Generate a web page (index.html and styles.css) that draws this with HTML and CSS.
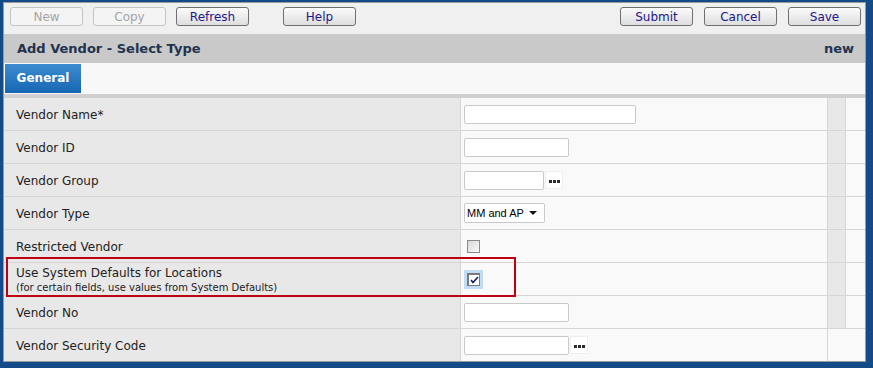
FILE: index.html
```html
<!DOCTYPE html>
<html lang="en">
<head>
    <meta charset="UTF-8">
    <title>Add Vendor - Select Type</title>
    <link rel="stylesheet" href="styles.css">
</head>
<body>
    <div class="panel">
        <!-- toolbar -->
        <div class="toolbar">
            <div class="btn-group">
                <button class="btn" disabled>New</button>
                <button class="btn" disabled>Copy</button>
                <button class="btn">Refresh</button>
                <button class="btn help">Help</button>
            </div>
            <div class="btn-group right">
                <button class="btn">Submit</button>
                <button class="btn">Cancel</button>
                <button class="btn">Save</button>
            </div>
        </div>

        <!-- title bar -->
        <div class="title-bar">
            <span>Add Vendor - Select Type</span>
            <span>new</span>
        </div>

        <!-- tabs -->
        <div class="tabs">
            <div class="tab active">General</div>
        </div>

        <!-- form -->
        <div class="form-wrap">
            <table class="form">
                <tr>
                    <td class="label">Vendor Name*</td>
                    <td class="value"><span class="field wide"></span></td>
                    <td class="gap"></td><td class="end"></td>
                </tr>
                <tr>
                    <td class="label">Vendor ID</td>
                    <td class="value"><span class="field"></span></td>
                    <td class="gap"></td><td class="end"></td>
                </tr>
                <tr>
                    <td class="label">Vendor Group</td>
                    <td class="value"><span class="field short"></span><span class="lookup"><i></i><i></i><i></i></span></td>
                    <td class="gap"></td><td class="end"></td>
                </tr>
                <tr>
                    <td class="label">Vendor Type</td>
                    <td class="value"><span class="dropdown">MM and AP<span class="arrow"></span></span></td>
                    <td class="gap"></td><td class="end"></td>
                </tr>
                <tr>
                    <td class="label">Restricted Vendor</td>
                    <td class="value"><span class="check-wrap"><span class="check"></span></span></td>
                    <td class="gap"></td><td class="end"></td>
                </tr>
                <tr>
                    <td class="label">Use System Defaults for Locations<br><small>(for certain fields, use values from System Defaults)</small></td>
                    <td class="value"><span class="check-wrap focused"><span class="check checked"><svg width="9" height="8" viewBox="0 0 9 8"><path d="M1 4 L3 6.5 L8 1" fill="none" stroke="#1a1a60" stroke-width="1.6"/></svg></span></span></td>
                    <td class="gap"></td><td class="end"></td>
                </tr>
                <tr>
                    <td class="label">Vendor No</td>
                    <td class="value"><span class="field"></span></td>
                    <td class="gap"></td><td class="end"></td>
                </tr>
                <tr>
                    <td class="label">Vendor Security Code</td>
                    <td class="value"><span class="field"></span><span class="lookup"><i></i><i></i><i></i></span></td>
                    <td class="end" colspan="2"></td>
                </tr>
            </table>
            <div class="highlight"></div>
        </div>
    </div>
</body>
</html>
```

FILE: styles.css
```css
html, body {
    margin: 0;
    padding: 0;
}
body {
    background-color: #124b88;
    padding: 2px 7px 6px 3px;
    font-family: "DejaVu Sans", Verdana, sans-serif;
    font-size: 12px;
    color: #222;
}
.panel {
    height: 358px;
    border: 1px solid #9a9a9a;
    background-color: #f0f0f0;
    display: flex;
    flex-direction: column;
}
.toolbar {
    height: 31px;
    display: flex;
    justify-content: space-between;
    padding: 0 4px 0 6px;
    align-items: flex-start;
}
.btn-group {
    display: flex;
    gap: 10px;
    padding-top: 4px;
}
.btn-group.right {
    gap: 11px;
}
.btn {
    width: 73px;
    height: 19px;
    padding: 0;
    font-family: "DejaVu Sans", Verdana, sans-serif;
    font-size: 12px;
    color: #22168e;
    background: linear-gradient(#fbfbfb, #dedede);
    border: 1px solid #707070;
    border-radius: 3px;
    line-height: 16px;
}
.btn.help {
    margin-left: 24px;
}
.btn[disabled] {
    color: #a4a4a4;
    border-color: #c4c4c4;
    background: #f4f4f4;
}
.title-bar {
    height: 29px;
    background-color: #c8c9c8;
    display: flex;
    justify-content: space-between;
    align-items: center;
    padding: 0 11px 0 13px;
    font-size: 13px;
    font-weight: bold;
    color: #1f3350;
}
.tabs {
    background-color: #f8f8f8;
    border-bottom: 4px solid #d0d0d0;
    box-sizing: border-box;
    height: 35px;
    padding: 1px 0 0 1px;
}
.tab {
    width: 76px;
    height: 29px;
    line-height: 29px;
    text-align: center;
    color: #fff;
    font-weight: bold;
    font-size: 12px;
}
.tab.active {
    background: linear-gradient(#3e8bd0, #1566b2);
}
.form-wrap {
    position: relative;
    flex: 1;
    background-color: #f9f9f9;
}
.form {
    width: 100%;
    border-collapse: collapse;
    table-layout: fixed;
}
.form td {
    height: 32px;
    padding: 0;
    border-bottom: 1px solid #d6d6d6;
    vertical-align: middle;
}
.form tr:last-child td {
    border-bottom: none;
}
.form td.label {
    width: 444px;
    padding: 2px 0 0 12px;
    height: 30px;
    background-color: #e8e8e8;
    border-right: 1px solid #d6d6d6;
    font-size: 12px;
    color: #222;
    line-height: 14px;
}
.form td.label small {
    font-size: 10px;
}
.form td.value {
    width: 363px;
    padding-left: 3px;
    background-color: #f9f9f9;
    border-right: 1px solid #d6d6d6;
}
.form td.gap {
    width: 17px;
    background-color: #e8e8e8;
    border-right: 1px solid #d6d6d6;
}
.form td.end {
    background-color: #f9f9f9;
}
.field {
    display: inline-block;
    vertical-align: middle;
    width: 103px;
    height: 17px;
    background: #fff;
    border: 1px solid #c9c9c9;
    border-radius: 2px;
}
.field.wide {
    width: 170px;
}
.field.short {
    width: 78px;
}
.lookup {
    display: inline-flex;
    vertical-align: middle;
    align-items: center;
    justify-content: center;
    gap: 1px;
    width: 18px;
    height: 18px;
    background: #fff;
    border: 1px solid #eee;
    box-sizing: border-box;
    margin-left: 1px;
    padding-top: 3px;
}
.lookup i {
    width: 3px;
    height: 3px;
    background: #2a2a2a;
}
.dropdown {
    display: inline-flex;
    align-items: center;
    justify-content: space-between;
    padding: 0 7px 0 2px;
    box-sizing: border-box;
    width: 81px;
    height: 20px;
    background: #fff;
    border: 1px solid #c9c9c9;
    border-radius: 2px;
    font-family: "Liberation Sans", Arial, sans-serif;
    font-size: 11px;
    color: #000;
    vertical-align: middle;
}
.arrow {
    width: 0;
    height: 0;
    border-left: 4px solid transparent;
    border-right: 4px solid transparent;
    border-top: 4px solid #111;
}
.check-wrap {
    display: inline-flex;
    align-items: center;
    justify-content: center;
    width: 19px;
    height: 19px;
    vertical-align: middle;
}
.check-wrap.focused {
    background-color: #c2dcf6;
}
.check {
    display: inline-flex;
    align-items: center;
    justify-content: center;
    width: 13px;
    height: 13px;
    box-sizing: border-box;
    border: 1px solid #8a8a8a;
    background: linear-gradient(135deg, #d8d8d8, #fbfbfb);
}
.check.checked {
    background: #fff;
    border-color: #7a7a7a;
    border-top-width: 2px;
    border-left-width: 2px;
}
.highlight {
    position: absolute;
    left: 2px;
    top: 159px;
    width: 506px;
    height: 36px;
    border: 2px solid #be0010;
}
```
